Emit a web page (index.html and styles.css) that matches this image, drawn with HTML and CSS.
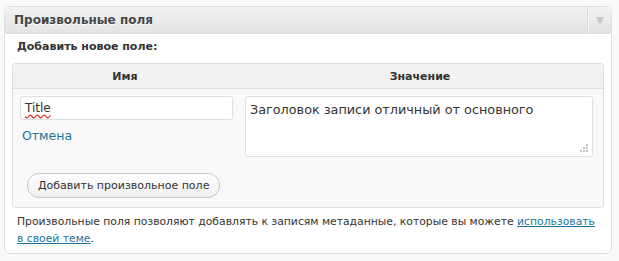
FILE: index.html
```html
<!DOCTYPE html>
<html>
<head>
    <title>Произвольные поля</title>
    <link rel="stylesheet" href="styles.css">
</head>
<body>
    <div class="postbox">
        <div class="hndle">
            <h3>Произвольные поля</h3>
            <div class="handlediv"><span class="arrow"></span></div>
        </div>
        <div class="inside">
            <p class="add-title">Добавить новое поле:</p>
            <table class="newmeta">
                <thead>
                    <tr>
                        <th class="col-key">Имя</th>
                        <th class="col-value">Значение</th>
                    </tr>
                </thead>
                <tbody>
                    <tr>
                        <td class="col-key">
                            <div class="metakey"><span class="misspelled">Title</span></div>
                            <a href="#" class="cancel">Отмена</a>
                        </td>
                        <td class="col-value">
                            <div class="value-wrap">
                                <textarea class="metavalue" spellcheck="false">Заголовок записи отличный от основного</textarea>
                                <svg class="grip" width="9" height="9" viewBox="0 0 9 9">
                                    <rect x="7" y="1" width="2" height="2"/>
                                    <rect x="4" y="4" width="2" height="2"/>
                                    <rect x="7" y="4" width="2" height="2"/>
                                    <rect x="1" y="7" width="2" height="2"/>
                                    <rect x="4" y="7" width="2" height="2"/>
                                    <rect x="7" y="7" width="2" height="2"/>
                                </svg>
                            </div>
                        </td>
                    </tr>
                    <tr>
                        <td colspan="2" class="submit">
                            <button type="button" class="button">Добавить произвольное поле</button>
                        </td>
                    </tr>
                </tbody>
            </table>
            <p class="help">Произвольные поля позволяют добавлять к записям метаданные, которые вы можете <a href="#">использовать в своей теме</a>.</p>
        </div>
    </div>
</body>
</html>
```

FILE: styles.css
```css
body {
    background-color: #f9f9f9;
    color: #333;
    font-family: "DejaVu Sans", Verdana, sans-serif;
    font-size: 11px;
    margin: 0;
    padding: 6px 7px 0 4px;
}

.postbox {
    background-color: #fff;
    border: 1px solid #dfdfdf;
    border-radius: 6px;
}

.hndle {
    display: flex;
    height: 26px;
    background: linear-gradient(to bottom, #f2f2f2, #e3e3e3);
    border-bottom: 1px solid #dfdfdf;
    border-radius: 6px 6px 0 0;
}

.hndle h3 {
    flex: 1;
    margin: 0;
    padding: 0 9px;
    font-size: 12px;
    font-weight: bold;
    line-height: 26px;
    color: #464646;
    text-shadow: 0 1px 0 #fff;
}

.handlediv {
    width: 22px;
    display: flex;
    align-items: center;
    justify-content: center;
    border-left: 1px solid #f4f4f4;
    box-shadow: -1px 0 0 #dcdcdc;
}

.arrow {
    width: 0;
    height: 0;
    border-left: 4px solid transparent;
    border-right: 4px solid transparent;
    border-top: 8px solid #c8c8c8;
    margin-top: 1px;
}

.inside {
    padding: 0 7px 6px 7px;
}

.add-title {
    margin: 0;
    padding: 5px 5px 8px;
    font-weight: bold;
    line-height: 16px;
}

.newmeta {
    width: 100%;
    border: 1px solid #dfdfdf;
    border-radius: 3px;
    border-spacing: 0;
    background-color: #f9f9f9;
}

.newmeta th {
    background-color: #f1f1f1;
    color: #333;
    font-weight: bold;
    height: 24px;
    padding: 0;
    text-align: center;
    border-bottom: 1px solid #dfdfdf;
}

.newmeta td {
    vertical-align: top;
    padding: 7px 10px 0 8px;
}

.newmeta td.col-key {
    width: 213px;
    padding-left: 7px;
    padding-right: 4px;
}

.newmeta th.col-key {
    width: 224px;
}

.metakey {
    box-sizing: border-box;
    width: 213px;
    height: 24px;
    padding: 0 4px;
    border: 1px solid #dfdfdf;
    border-radius: 3px;
    background-color: #fff;
    font-size: 12px;
    line-height: 22px;
    color: #333;
}

.misspelled {
    text-decoration: underline wavy #e02020;
    text-decoration-skip-ink: none;
    text-underline-offset: 2px;
}

.cancel {
    display: block;
    margin: 8px 0 0 2px;
    color: #21759b;
    text-decoration: none;
    font-size: 12.5px;
}

.value-wrap {
    position: relative;
    width: 348px;
}

.metavalue {
    display: block;
    box-sizing: border-box;
    width: 348px;
    height: 61px;
    margin: 0;
    padding: 5px 4px;
    border: 1px solid #dfdfdf;
    border-radius: 3px;
    font-family: inherit;
    font-size: 12.8px;
    color: #333;
    resize: none;
}

.grip {
    position: absolute;
    right: 5px;
    bottom: 5px;
    fill: #c4c4c4;
}

.newmeta td.submit {
    padding: 16px 14px 9px;
}

.button {
    height: 25px;
    padding: 0 10px;
    border: 1px solid #c6c6c6;
    border-radius: 12px;
    background: linear-gradient(to bottom, #fefefe, #f0f0f0);
    font-family: inherit;
    font-size: 11px;
    color: #333;
}

.help {
    margin: 0;
    padding: 5px 0 0 5px;
    font-size: 10.8px;
    line-height: 17px;
    color: #333;
}

.help a {
    color: #21759b;
}
```
